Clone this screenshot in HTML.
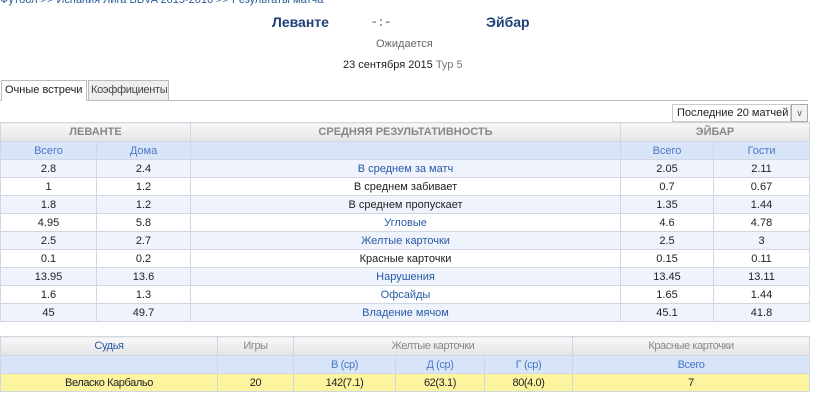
<!DOCTYPE html>
<html><head><meta charset="utf-8"><style>
*{margin:0;padding:0;box-sizing:border-box}
body{width:815px;height:403px;overflow:hidden;background:#fff;font-family:"Liberation Sans",Arial,sans-serif;font-size:11px;color:#222;position:relative}
.a{position:absolute;white-space:nowrap}
.bc{top:-6px;left:0;font-size:11px;color:#2a5a9a}
.team{top:14px;font-size:14px;font-weight:bold;color:#1f3f77}
.sc{top:13px;left:372px;font-size:14px;font-weight:bold;color:#999;letter-spacing:2px}
.tab{top:80px;height:20px;border:1px solid #bbb;border-bottom:none;padding:3px 3px;font-size:11px;overflow:hidden}
table{position:absolute;border-collapse:collapse;table-layout:fixed}
td{border:1px solid #d0d6e2;text-align:center;height:18px;padding:0;font-size:11px;white-space:nowrap}
.h td{background:linear-gradient(#f8f8f8,#e4e4e4);color:#888;font-weight:bold;height:19px}
.s td{background:#d8e4f8;color:#4a78c8}
.b td{background:#eef3fc}
.l{color:#2a5aa8}
.t2 td{font-size:11px;letter-spacing:-0.4px}
.t2 .h td{font-weight:normal;color:#888}
.t2 .h td.l{color:#2a5aa8}
.y td{background:#fdf4a0;color:#222}
</style></head><body>
<div class="a bc">Футбол &gt;&gt; Испания Лига BBVA 2015-2016 &gt;&gt; Результаты матча</div>
<div class="a team" style="left:272px">Леванте</div>
<div class="a sc">-:-</div>
<div class="a team" style="left:486px">Эйбар</div>
<div class="a" style="top:38px;left:376px;color:#666">Ожидается</div>
<div class="a" style="top:59px;left:343px;color:#222">23 сентября 2015 <span style="color:#777">Тур 5</span></div>
<div class="a" style="top:100px;left:0;width:808px;border-top:1px solid #bbb"></div>
<div class="a tab" style="left:1px;width:86px;background:#fff;height:21px">Очные встречи</div>
<div class="a tab" style="left:88px;width:81px;background:#eee;color:#444;letter-spacing:-0.3px;padding:3px 2px">Коэффициенты</div>
<div class="a" style="top:104px;left:672px;width:119px;height:18px;border:1px solid #ccc;padding:2px 4px;font-size:11px;overflow:hidden">Последние 20 матчей</div>
<div class="a" style="top:104px;left:791px;width:17px;height:18px;border:1px solid #aaa;background:#f2f2f2;text-align:center;color:#666;font-size:9px;line-height:16px">&#8744;</div>
<table style="top:122px;left:0;width:809px">
<colgroup><col style="width:96px"><col style="width:94px"><col style="width:430px"><col style="width:93px"><col style="width:96px"></colgroup>
<tr class="h"><td colspan="2">ЛЕВАНТЕ</td><td>СРЕДНЯЯ РЕЗУЛЬТАТИВНОСТЬ</td><td colspan="2">ЭЙБАР</td></tr>
<tr class="s"><td>Всего</td><td>Дома</td><td></td><td>Всего</td><td>Гости</td></tr>
<tr class="b"><td>2.8</td><td>2.4</td><td class="l">В среднем за матч</td><td>2.05</td><td>2.11</td></tr>
<tr><td>1</td><td>1.2</td><td>В среднем забивает</td><td>0.7</td><td>0.67</td></tr>
<tr class="b"><td>1.8</td><td>1.2</td><td>В среднем пропускает</td><td>1.35</td><td>1.44</td></tr>
<tr><td>4.95</td><td>5.8</td><td class="l">Угловые</td><td>4.6</td><td>4.78</td></tr>
<tr class="b"><td>2.5</td><td>2.7</td><td class="l">Желтые карточки</td><td>2.5</td><td>3</td></tr>
<tr><td>0.1</td><td>0.2</td><td>Красные карточки</td><td>0.15</td><td>0.11</td></tr>
<tr class="b"><td>13.95</td><td>13.6</td><td class="l">Нарушения</td><td>13.45</td><td>13.11</td></tr>
<tr><td>1.6</td><td>1.3</td><td class="l">Офсайды</td><td>1.65</td><td>1.44</td></tr>
<tr class="b"><td>45</td><td>49.7</td><td class="l">Владение мячом</td><td>45.1</td><td>41.8</td></tr>
</table>
<table class="t2" style="top:336px;left:0;width:809px">
<colgroup><col style="width:217px"><col style="width:76px"><col style="width:102px"><col style="width:89px"><col style="width:88px"><col style="width:237px"></colgroup>
<tr class="h"><td class="l">Судья</td><td>Игры</td><td colspan="3">Желтые карточки</td><td>Красные карточки</td></tr>
<tr class="s"><td></td><td></td><td>В (ср)</td><td>Д (ср)</td><td>Г (ср)</td><td>Всего</td></tr>
<tr class="y"><td>Веласко Карбальо</td><td>20</td><td>142(7.1)</td><td>62(3.1)</td><td>80(4.0)</td><td>7</td></tr>
</table>
</body></html>
